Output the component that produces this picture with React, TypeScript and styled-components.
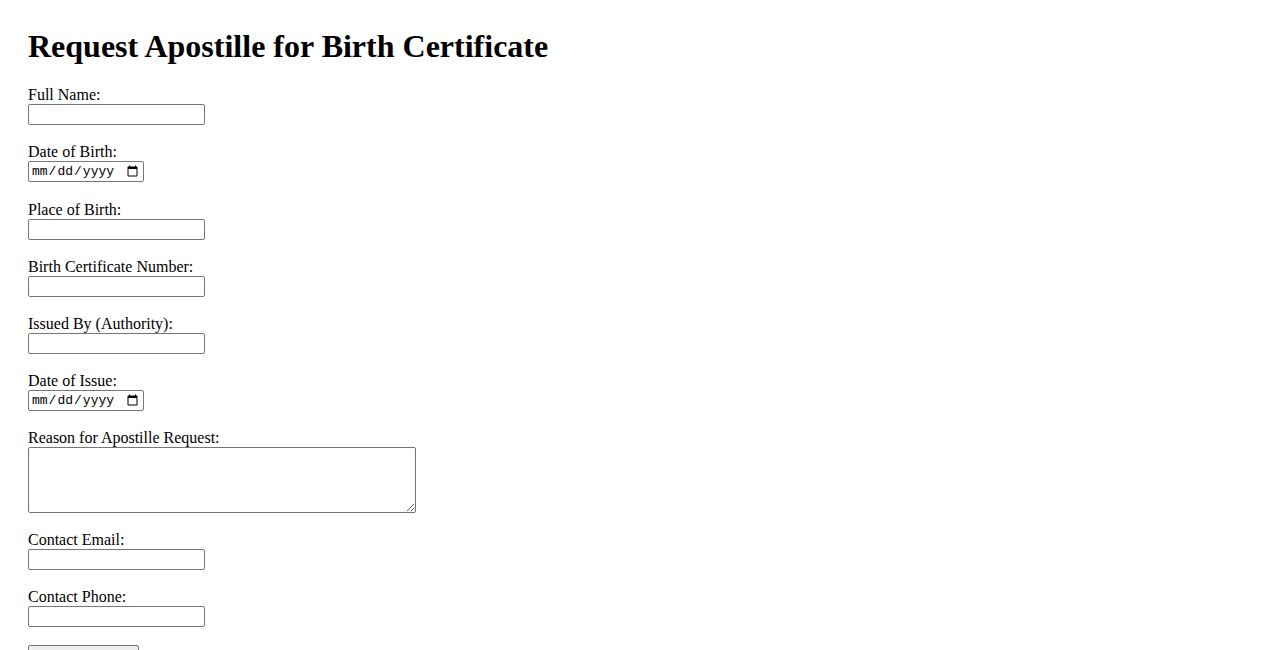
import styled, { createGlobalStyle } from "styled-components";

const GlobalStyle = createGlobalStyle`
  html, body {
    margin: 0;
    padding: 0;
    background: #fff;
  }
  body {
    font-family: "Liberation Serif", "Times New Roman", serif;
    font-size: 16px;
    color: #000;
  }
`;

const Page = styled.div`
  padding: 0 28px;
`;

const Title = styled.h1`
  font-size: 32px;
  font-weight: bold;
  line-height: 37px;
  margin: 28px 0 21px;
`;

const Form = styled.form`
  display: flex;
  flex-direction: column;
  align-items: flex-start;
`;

const Field = styled.div<{ $spacing?: number }>`
  display: flex;
  flex-direction: column;
  align-items: flex-start;
  margin-bottom: ${(p) => p.$spacing ?? 18}px;
`;

const Label = styled.label`
  display: block;
  line-height: 18px;
  height: 18px;
`;

const TextInput = styled.input`
  box-sizing: border-box;
  width: 177px;
  height: 21px;
  margin: 0;
  padding: 1px 2px;
  border: 1px solid #767676;
  border-radius: 2px;
  font-family: "Liberation Sans", Arial, sans-serif;
  font-size: 13.33px;
  background: #fff;
`;

const DateInput = styled(TextInput)`
  width: 116px;
  height: 21px;
  font-family: "Liberation Mono", "DejaVu Sans Mono", monospace;
  font-size: 13px;
  padding: 0 2px;
`;

const TextArea = styled.textarea`
  box-sizing: border-box;
  width: 388px;
  height: 66px;
  margin: 0;
  padding: 2px;
  border: 1px solid #767676;
  border-radius: 2px;
  font-family: "Liberation Mono", monospace;
  font-size: 13.33px;
`;

const SubmitButton = styled.button`
  box-sizing: border-box;
  width: 111px;
  height: 21px;
  padding: 1px 6px;
  border: 1px solid #767676;
  border-radius: 2px;
  background: #efefef;
  font-family: "Liberation Sans", Arial, sans-serif;
  font-size: 13.33px;
  color: #000;
`;

type FieldDef = {
  id: string;
  label: string;
  type: "text" | "date" | "email" | "tel" | "textarea";
  spacing?: number;
};

const fields: FieldDef[] = [
  { id: "fullName", label: "Full Name:", type: "text" },
  { id: "dob", label: "Date of Birth:", type: "date", spacing: 19 },
  { id: "pob", label: "Place of Birth:", type: "text" },
  { id: "certNumber", label: "Birth Certificate Number:", type: "text" },
  { id: "issuedBy", label: "Issued By (Authority):", type: "text" },
  { id: "issueDate", label: "Date of Issue:", type: "date" },
  { id: "reason", label: "Reason for Apostille Request:", type: "textarea" },
  { id: "email", label: "Contact Email:", type: "email" },
  { id: "phone", label: "Contact Phone:", type: "tel" },
];

const App = () => {
  return (
    <>
      <GlobalStyle />
      <Page>
        <Title>Request Apostille for Birth Certificate</Title>
        <Form onSubmit={(e) => e.preventDefault()}>
          {fields.map((f) => (
            <Field key={f.id} $spacing={f.spacing}>
              <Label htmlFor={f.id}>{f.label}</Label>
              {f.type === "textarea" ? (
                <TextArea id={f.id} />
              ) : f.type === "date" ? (
                <DateInput id={f.id} type="date" />
              ) : (
                <TextInput id={f.id} type={f.type} />
              )}
            </Field>
          ))}
          <SubmitButton type="submit">Submit Request</SubmitButton>
        </Form>
      </Page>
    </>
  );
};

export default App;
